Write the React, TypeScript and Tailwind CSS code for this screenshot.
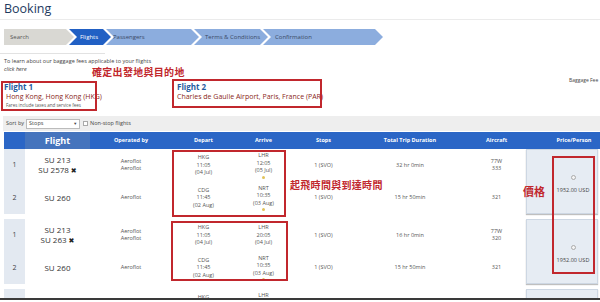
import React from 'react';

type Leg = {
    flight: string[];
    cancel?: boolean;
    operated: string[];
    dep: string[];
    arr: string[];
    star?: boolean;
    stops: string;
    duration: string;
    aircraft: string[];
};

type Group = { legs: Leg[] };

const groups: Group[] = [
    {
        legs: [
            { flight: ['SU 213', 'SU 2578'], cancel: true, operated: ['Aeroflot', 'Aeroflot'], dep: ['HKG', '11:05', '(04 Jul)'], arr: ['LHR', '12:05', '(05 Jul)'], star: true, stops: '1 (SVO)', duration: '32 hr 0min', aircraft: ['77W', '333'] },
            { flight: ['SU 260'], operated: ['Aeroflot'], dep: ['CDG', '11:45', '(02 Aug)'], arr: ['NRT', '10:35', '(03 Aug)'], star: true, stops: '1 (SVO)', duration: '15 hr 50min', aircraft: ['321'] },
        ],
    },
    {
        legs: [
            { flight: ['SU 213', 'SU 263'], cancel: true, operated: ['Aeroflot', 'Aeroflot'], dep: ['HKG', '11:05', '(04 Jul)'], arr: ['LHR', '20:05', '(04 Jul)'], stops: '1 (SVO)', duration: '16 hr 0min', aircraft: ['77W', '320'] },
            { flight: ['SU 260'], operated: ['Aeroflot'], dep: ['CDG', '11:45', '(02 Aug)'], arr: ['NRT', '10:35', '(03 Aug)'], star: true, stops: '1 (SVO)', duration: '15 hr 50min', aircraft: ['321'] },
        ],
    },
    {
        legs: [
            { flight: ['SU 213', 'SU 2578'], cancel: true, operated: ['Aeroflot', 'Aeroflot'], dep: ['HKG', '11:05', '(04 Jul)'], arr: ['LHR', '12:05', '(05 Jul)'], star: true, stops: '1 (SVO)', duration: '32 hr 0min', aircraft: ['77W', '333'] },
            { flight: ['SU 260'], operated: ['Aeroflot'], dep: ['CDG', '11:45', '(02 Aug)'], arr: ['NRT', '10:35', '(03 Aug)'], star: true, stops: '1 (SVO)', duration: '15 hr 50min', aircraft: ['321'] },
        ],
    },
];

const steps = [
    { label: 'Search', w: 'w-[70px]', pl: 'pl-[6px]', bg: 'bg-[#d9d8d3]', text: 'text-[#555]', first: true },
    { label: 'Flights', w: 'w-[42px]', pl: 'pl-[11px]', bg: 'bg-[#2160c4]', text: 'text-white' },
    { label: 'Passengers', w: 'w-[93px]', pl: 'pl-[7px]', bg: 'bg-[#8cadde]', text: 'text-[#3b4a66]' },
    { label: 'Terms & Conditions', w: 'w-[74px]', pl: 'pl-[11px]', bg: 'bg-[#8cadde]', text: 'text-[#3b4a66]' },
    { label: 'Confirmation', w: 'w-[120px]', pl: 'pl-[12px]', bg: 'bg-[#8cadde]', text: 'text-[#3b4a66]' },
];

const gridCols = 'grid grid-cols-[21px_65px_82px_63px_57px_63px_110px_63px_70px]';

function Lines({ items, star }: { items: string[]; star?: boolean }) {
    return (
        <div className="flex flex-col items-center justify-center text-[5.5px] leading-[7.5px] text-[#555]">
            {items.map((t, i) => (
                <span key={i}>{t}</span>
            ))}
            {star && <span className="mt-[1px] w-[3px] h-[3px] rounded-full bg-[#e2c25a]" />}
        </div>
    );
}

function FlightGroup({ group }: { group: Group }) {
    const [a, b] = group.legs;
    const row = (leg: Leg) => [
        <div key="f" className="flex flex-col items-center justify-center text-[8px] leading-[10px] text-[#333]">
            {leg.flight.map((f, i) => (
                <span key={i}>
                    {f}
                    {leg.cancel && i === leg.flight.length - 1 && (
                        <span className="ml-[2px] text-[7px] font-bold text-[#222] font-['DejaVu_Sans',sans-serif]">✖</span>
                    )}
                </span>
            ))}
        </div>,
        <Lines key="o" items={leg.operated} />,
        <Lines key="d" items={leg.dep} />,
        <Lines key="a" items={leg.arr} star={leg.star} />,
        <Lines key="s" items={[leg.stops]} />,
        <Lines key="t" items={[leg.duration]} />,
        <Lines key="c" items={leg.aircraft} />,
    ];

    return (
        <div className={`${gridCols} grid-rows-[32.5px_32.5px] h-[65px] mb-[5px]`}>
            <div className="row-span-2 bg-[#e3e9f1] flex flex-col text-[7px] text-[#444]">
                <div className="flex-1 flex items-center justify-center">1</div>
                <div className="flex-1 flex items-center justify-center">2</div>
            </div>
            {row(a)}
            <div className="row-span-2 ml-[-2px] bg-[#e6ecf3] border border-[#cdd7e3] shadow-[0_1px_1px_rgba(0,0,0,0.25)] flex flex-col items-center justify-center pl-[22px] pt-[7px] text-[5.5px] text-[#444]">
                <span className="w-[5px] h-[5px] rounded-full border border-[#aaa] bg-[#f4f4f4] mb-[6px]" />
                <span>1952.00 USD</span>
            </div>
            {row(b)}
        </div>
    );
}

export default function App() {
    return (
        <div className="relative w-[600px] h-[302px] overflow-hidden bg-white font-['Open_Sans',sans-serif]">
            <div className="h-[300px] overflow-hidden border-b-2 border-[#3a3a3a]">
                <h1 className="pl-[4px] pt-[1px] text-[12.5px] leading-[15px] text-[#1e3a5f]">Booking</h1>
                <div className="mt-[3px] h-px bg-[#ebebeb]" />

                <div className="mt-[9px] ml-[4px] flex h-[16px]">
                    {steps.map((s, i) => (
                        <div
                            key={s.label}
                            className={`${s.w} ${s.pl} ${s.bg} ${s.text} ${i > 0 ? 'ml-[-5px]' : ''} ${
                                s.first
                                    ? '[clip-path:polygon(0_0,calc(100%-8px)_0,100%_50%,calc(100%-8px)_100%,0_100%)]'
                                    : '[clip-path:polygon(0_0,calc(100%-8px)_0,100%_50%,calc(100%-8px)_100%,0_100%,8px_50%)]'
                            } flex items-center text-[6px] whitespace-nowrap`}
                        >
                            {s.label}
                        </div>
                    ))}
                </div>

                <div className="mt-[8px] w-[105px] h-px bg-[#e2e2e2]" />
                <p className="mt-[4px] pl-[4px] text-[5.5px] leading-[7px] text-[#444]">
                    To learn about our baggage fees applicable to your flights
                </p>
                <p className="pl-[4px] text-[5.5px] leading-[8px] italic text-[#333]">click here</p>

                <div className="mt-[5px] flex h-[35px] relative">
                    <div className="pl-[4px] pt-[4px] w-[177px]">
                        <div className="text-[8px] leading-[10px] font-bold text-[#1f5b9e]">Flight 1</div>
                        <div className="pl-[2px] text-[7px] leading-[10px] text-[#8a1f22]">Hong Kong, Hong Kong (HKG)</div>
                        <div className="pl-[2px] text-[4.5px] leading-[6px] text-[#555]">Fares include taxes and service fees</div>
                    </div>
                    <div className="pt-[4px] flex-1">
                        <div className="text-[8px] leading-[10px] font-bold text-[#1f5b9e]">Flight 2</div>
                        <div className="text-[7px] leading-[10px] text-[#8a1f22]">Charles de Gaulle Airport, Paris, France (PAR)</div>
                    </div>
                    <div className="absolute left-[569px] top-[-1px] text-[5px] text-[#444] whitespace-nowrap">Baggage Fee</div>
                </div>

                <div className="mt-[3px] ml-[3px] h-[15px] bg-[#eeeeee] flex items-center gap-[2px] pl-[3px] text-[5.5px] text-[#444]">
                    <span>Sort by</span>
                    <div className="w-[54px] h-[10px] bg-white border border-[#bbb] flex items-center justify-between px-[2px]">
                        <span>Stops</span>
                        <span className="text-[4px]">▼</span>
                    </div>
                    <span className="ml-[1px] w-[5px] h-[5px] border border-[#aaa] bg-white" />
                    <span>Non-stop flights</span>
                </div>

                <div className="ml-[4px] mt-[1px]">
                    <div className={`${gridCols} h-[17px] bg-[#2b66c6] text-white text-[5.5px] font-bold`}>
                        <div />
                        <div className="bg-[#4574bd] flex items-center justify-center text-[9px]">Flight</div>
                        <div className="flex items-center justify-center">Operated by</div>
                        <div className="flex items-center justify-center">Depart</div>
                        <div className="flex items-center justify-center">Arrive</div>
                        <div className="flex items-center justify-center">Stops</div>
                        <div className="flex items-center justify-center">Total Trip Duration</div>
                        <div className="flex items-center justify-center">Aircraft</div>
                        <div className="flex items-center justify-center pl-[22px]">Price/Person</div>
                    </div>
                    {groups.map((g, i) => (
                        <FlightGroup key={i} group={g} />
                    ))}
                </div>
            </div>

            {/* red annotation marks drawn over the screenshot */}
            <div className="absolute left-[1px] top-[81px] w-[96px] h-[30px] border-2 border-[#c1272d]" />
            <div className="absolute left-[172px] top-[79px] w-[150px] h-[29px] border-2 border-[#c1272d]" />
            <div className="absolute left-[172px] top-[150px] w-[114px] h-[67px] border-2 border-[#c1272d]" />
            <div className="absolute left-[171px] top-[221px] w-[117px] h-[60px] border-2 border-[#c1272d]" />
            <div className="absolute left-[552px] top-[156px] w-[43px] h-[118px] border-2 border-[#c1272d]" />

            <div className="absolute left-[92px] top-[66px] text-[10px] leading-[11px] font-bold tracking-[0.3px] text-[#c1272d] font-['Noto_Sans_CJK_TC',sans-serif]">
                確定出發地與目的地
            </div>
            <div className="absolute left-[290px] top-[179px] text-[10px] leading-[12px] font-bold tracking-[0.3px] text-[#c1272d] font-['Noto_Sans_CJK_TC',sans-serif]">
                起飛時間與到達時間
            </div>
            <div className="absolute left-[523px] top-[185px] text-[11px] leading-[12px] font-bold text-[#c1272d] font-['Noto_Sans_CJK_TC',sans-serif]">
                價格
            </div>
        </div>
    );
}
